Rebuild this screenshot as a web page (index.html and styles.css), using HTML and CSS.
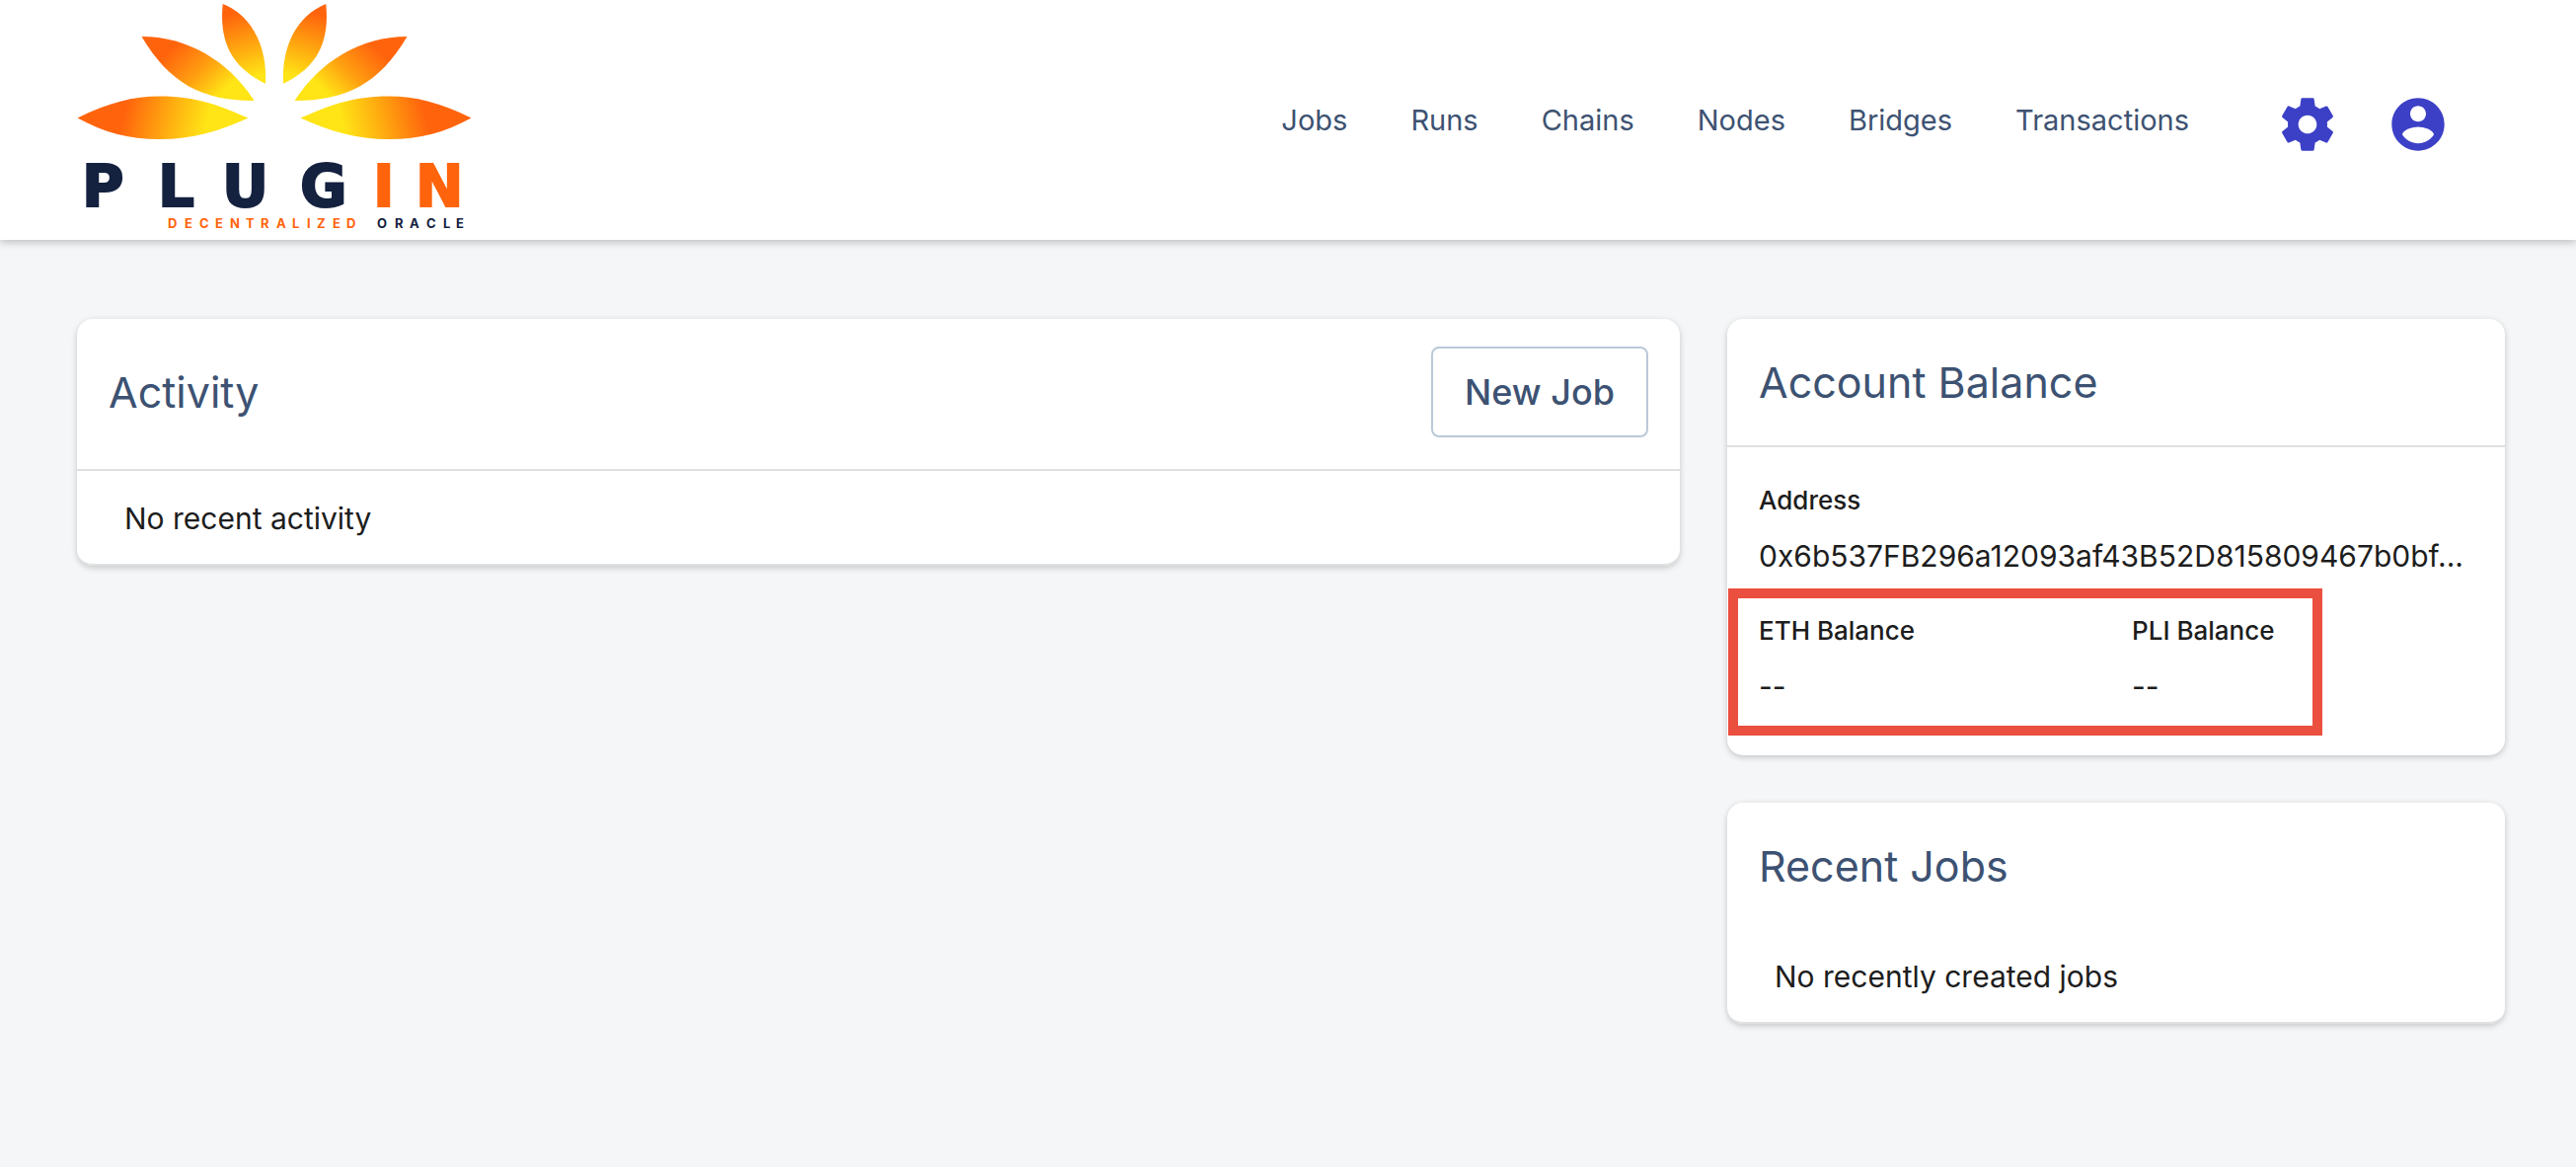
FILE: index.html
```
<!DOCTYPE html>
<html lang="en">
<head>
    <meta charset="UTF-8">
    <meta name="viewport" content="width=device-width, initial-scale=1.0">
    <title>Plugin | Dashboard</title>
    <link rel="stylesheet" href="styles.css">
</head>
<body>
    <header class="header">
        <a href="#" class="logo" aria-label="Plugin">
            <svg viewBox="78 0 400 243" width="400" height="243">
                <defs>
                    <linearGradient id="g1" gradientUnits="userSpaceOnUse" x1="128" y1="108" x2="208" y2="128">
                        <stop offset="0" stop-color="#ff640d"/>
                        <stop offset="0.55" stop-color="#ffad10"/>
                        <stop offset="1" stop-color="#ffe416"/>
                    </linearGradient>
                    <linearGradient id="g2" gradientUnits="userSpaceOnUse" x1="174" y1="50" x2="220" y2="98">
                        <stop offset="0" stop-color="#ff640d"/>
                        <stop offset="0.55" stop-color="#ffa010"/>
                        <stop offset="1" stop-color="#ffe416"/>
                    </linearGradient>
                    <linearGradient id="g3" gradientUnits="userSpaceOnUse" x1="236" y1="14" x2="256" y2="78">
                        <stop offset="0" stop-color="#ff640d"/>
                        <stop offset="0.6" stop-color="#ffb010"/>
                        <stop offset="1" stop-color="#ffe416"/>
                    </linearGradient>
                    <g id="petals">
                        <path fill="url(#g1)" d="M78.500 119.500C110 104 135 97.500 162 97.500C200 97.500 222 107 251.500 119.500C222 133 195 141 162 141C130 141 105 134 78.500 119.500Z"/>
                        <path fill="url(#g2)" d="M143.500 37C190 37 232 62 257.500 102C205 102 172 85 143.500 37Z"/>
                        <path fill="url(#g3)" d="M225.700 4C256 16 271 48 269 84.700C234 68 222 42 225.700 4Z"/>
                    </g>
                </defs>
                <use href="#petals"/>
                <use href="#petals" transform="translate(556 0) scale(-1 1)"/>
                <text class="logo-name" y="209" x="83 160 225 304 378 421">PLUG<tspan class="logo-orange">IN</tspan></text>
                <text class="logo-tag logo-orange" y="231" x="170 187 202 218 233 249 264 280 296 311 321 337 351">DECENTRALIZED</text>
                <text class="logo-tag" y="231" x="382 400 415 432 449 462">ORACLE</text>
            </svg>
        </a>
        <nav class="nav">
            <a href="#">Jobs</a>
            <a href="#">Runs</a>
            <a href="#">Chains</a>
            <a href="#">Nodes</a>
            <a href="#">Bridges</a>
            <a href="#">Transactions</a>
        </nav>
        <div class="actions">
            <button class="icon-button" aria-label="Settings">
                <svg viewBox="0 0 24 24"><path d="M19.430 12.980c.04-.32.07-.64.07-.98s-.03-.66-.07-.98l2.110-1.650c.19-.15.24-.42.12-.64l-2-3.460c-.12-.22-.39-.3-.61-.22l-2.490 1c-.52-.4-1.080-.73-1.690-.98l-.38-2.650C14.460 2.180 14.250 2 14 2h-4c-.25 0-.46.18-.49.42l-.38 2.650c-.61.25-1.170.59-1.690.98l-2.490-1c-.23-.09-.49 0-.61.22l-2 3.460c-.13.22-.07.49.12.64l2.110 1.650c-.04.32-.07.65-.07.98s.03.66.07.98l-2.110 1.650c-.19.15-.24.42-.12.64l2 3.460c.12.22.39.3.61.22l2.490-1c.52.4 1.080.73 1.690.98l.38 2.650c.03.24.24.42.49.42h4c.25 0 .46-.18.49-.42l.38-2.650c.61-.25 1.170-.59 1.690-.98l2.490 1c.23.09.49 0 .61-.22l2-3.460c.12-.22.07-.49-.12-.64l-2.110-1.650zM12 15.500c-1.930 0-3.500-1.570-3.500-3.500s1.570-3.500 3.500-3.500 3.500 1.570 3.500 3.500-1.570 3.500-3.500 3.500z"/></svg>
            </button>
            <button class="icon-button" aria-label="Account">
                <svg viewBox="0 0 24 24"><path d="M12 2C6.480 2 2 6.480 2 12s4.480 10 10 10 10-4.480 10-10S17.520 2 12 2zm0 3c1.660 0 3 1.340 3 3s-1.340 3-3 3-3-1.340-3-3 1.340-3 3-3zm0 14.200c-2.500 0-4.710-1.280-6-3.220.03-1.990 4-3.080 6-3.080 1.990 0 5.970 1.090 6 3.080-1.290 1.940-3.500 3.220-6 3.220z"/></svg>
            </button>
        </div>
    </header>

    <main class="content">
        <section class="card activity">
            <div class="card-header activity-header">
                <h2>Activity</h2>
                <button class="new-job">New Job</button>
            </div>
            <p class="empty">No recent activity</p>
        </section>

        <div class="sidebar">
            <section class="card">
                <div class="card-header">
                    <h2>Account Balance</h2>
                </div>
                <dl class="account">
                    <div class="address">
                        <dt>Address</dt>
                        <dd>0x6b537FB296a12093af43B52D815809467b0bf...</dd>
                    </div>
                    <div>
                        <dt>ETH Balance</dt>
                        <dd>--</dd>
                    </div>
                    <div>
                        <dt>PLI Balance</dt>
                        <dd>--</dd>
                    </div>
                </dl>
                <div class="highlight"></div>
            </section>

            <section class="card">
                <div class="card-header no-line">
                    <h2>Recent Jobs</h2>
                </div>
                <p class="empty">No recently created jobs</p>
            </section>
        </div>
    </main>
</body>
</html>
```
FILE: styles.css
```
* {
    box-sizing: border-box;
}

body {
    font-family: Inter, "Liberation Sans", sans-serif;
    font-size: 30px;
    line-height: 48px;
    background-color: #f5f6f8;
    color: #1d1d1d;
    margin: 0;
}

h2, p, dl, dd {
    margin: 0;
}

/* HEADER */

.header {
    display: flex;
    align-items: center;
    background-color: #fff;
    padding: 0 128px 0 78px;
    box-shadow: 0 2px 8px rgba(0, 0, 0, 0.25);
}

.logo {
    display: flex;
    margin-right: auto;
}

.logo-name {
    font-family: "DejaVu Sans", sans-serif;
    font-size: 58px;
    font-weight: bold;
    fill: #14213f;
    stroke: #14213f;
    stroke-width: 2px;
}

.logo-tag {
    font-size: 13px;
    font-weight: 700;
    fill: #14213f;
}

.logo .logo-orange {
    fill: #ff640d;
}

.logo-name .logo-orange {
    stroke: #ff640d;
}

.nav {
    display: flex;
    gap: 64px;
    margin-right: 88px;
}

.nav a {
    font-size: 29px;
    color: #3d5272;
    text-decoration: none;
}

.actions {
    display: flex;
    gap: 48px;
    padding-top: 8px;
}

.icon-button {
    display: flex;
    padding: 0;
    border: none;
    background: none;
    cursor: pointer;
}

.icon-button svg {
    width: 64px;
    height: 64px;
    fill: #3c40c6;
}

/* CARDS */

.content {
    display: grid;
    grid-template-columns: repeat(12, 1fr);
    gap: 48px;
    align-items: start;
    padding: 80px 72px 80px 78px;
}

.activity {
    grid-column: span 8;
}

.sidebar {
    grid-column: span 4;
    display: grid;
    gap: 48px;
}

.card {
    position: relative;
    background-color: #fff;
    border-radius: 16px;
    box-shadow: 0 2px 6px rgba(0, 0, 0, 0.2);
}

.card-header {
    padding: 32px;
    border-bottom: 2px solid #dfe0e1;
}

.card-header h2 {
    font-size: 43px;
    line-height: 64px;
    font-weight: 400;
    color: #3d5272;
}

.no-line {
    border-bottom: none;
}

.activity-header {
    display: flex;
    justify-content: space-between;
    align-items: center;
    padding: 28px 32px 32px;
}

.new-job {
    font-family: inherit;
    font-size: 36px;
    line-height: 56px;
    font-weight: 500;
    color: #3d5272;
    background-color: #fff;
    border: 2px solid #bac9d8;
    border-radius: 8px;
    padding: 16px 32px;
    cursor: pointer;
}

.empty {
    padding: 24px 48px 22px;
    border-bottom: 2px solid #dfe0e1;
    border-radius: 0 0 16px 16px;
}

.account {
    display: grid;
    grid-template-columns: 1fr 1fr;
    gap: 30px 32px;
    padding: 32px 32px 46px;
}

.account dt {
    font-size: 26px;
    line-height: 44px;
    font-weight: 500;
    margin-bottom: 10px;
}

.address {
    grid-column: span 2;
}

/* red frame over the balances */
.highlight {
    position: absolute;
    left: 1px;
    right: 185px;
    bottom: 20px;
    height: 149px;
    border: 10px solid #eb4f3f;
}
```
